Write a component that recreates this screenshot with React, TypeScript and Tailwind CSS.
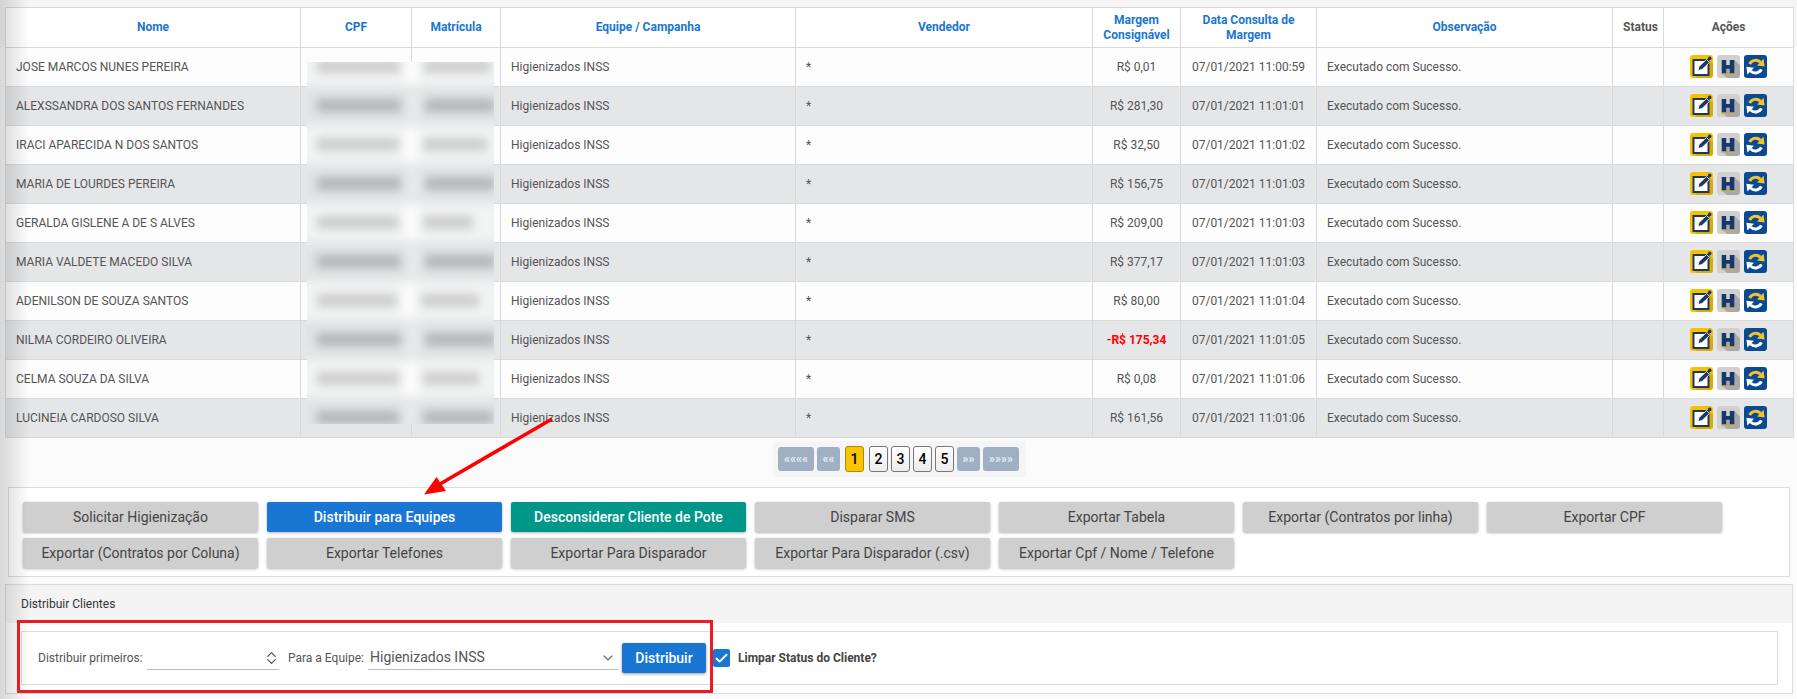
import { Check, ChevronDown, ChevronUp } from "lucide-react"

const rows = [
  { nome: "JOSE MARCOS NUNES PEREIRA", margem: "R$ 0,01", data: "07/01/2021 11:00:59", bars: [83, 66] },
  { nome: "ALEXSSANDRA DOS SANTOS FERNANDES", margem: "R$ 281,30", data: "07/01/2021 11:01:01", bars: [84, 70] },
  { nome: "IRACI APARECIDA N DOS SANTOS", margem: "R$ 32,50", data: "07/01/2021 11:01:02", bars: [82, 64] },
  { nome: "MARIA DE LOURDES PEREIRA", margem: "R$ 156,75", data: "07/01/2021 11:01:03", bars: [84, 70] },
  { nome: "GERALDA GISLENE A DE S ALVES", margem: "R$ 209,00", data: "07/01/2021 11:01:03", bars: [82, 50] },
  { nome: "MARIA VALDETE MACEDO SILVA", margem: "R$ 377,17", data: "07/01/2021 11:01:03", bars: [84, 70] },
  { nome: "ADENILSON DE SOUZA SANTOS", margem: "R$ 80,00", data: "07/01/2021 11:01:04", bars: [80, 58] },
  { nome: "NILMA CORDEIRO OLIVEIRA", margem: "-R$ 175,34", data: "07/01/2021 11:01:05", bars: [84, 70] },
  { nome: "CELMA SOUZA DA SILVA", margem: "R$ 0,08", data: "07/01/2021 11:01:06", bars: [82, 56] },
  { nome: "LUCINEIA CARDOSO SILVA", margem: "R$ 161,56", data: "07/01/2021 11:01:06", bars: [82, 70] },
]

const actionButtons = [
  "Solicitar Higienização",
  "Distribuir para Equipes",
  "Desconsiderar Cliente de Pote",
  "Disparar SMS",
  "Exportar Tabela",
  "Exportar (Contratos por linha)",
  "Exportar CPF",
  "Exportar (Contratos por Coluna)",
  "Exportar Telefones",
  "Exportar Para Disparador",
  "Exportar Para Disparador (.csv)",
  "Exportar Cpf / Nome / Telefone",
]

function EditIcon() {
  return (
    <svg width="23" height="23" viewBox="0 0 23 23">
      <rect width="23" height="23" rx="3" fill="#f6c200" />
      <path d="M20 6 L23 9 V20 A3 3 0 0 1 20 23 H7 L3 19 Z" fill="#dcaa00" />
      <rect x="3.5" y="5" width="15" height="15" fill="#fff" stroke="#1d3763" strokeWidth="2" />
      <path d="M8 15.5 L9 11.5 L16.5 4.5 L19.5 7.5 L12 14.5 Z" fill="#1d3763" stroke="#fff" strokeWidth="0.8" />
      <circle cx="19.7" cy="3.4" r="1.8" fill="#1d3763" />
    </svg>
  )
}

function HIcon() {
  return (
    <svg width="23" height="23" viewBox="0 0 23 23">
      <rect width="23" height="23" rx="3" fill="#d0d0d0" />
      <path d="M17.5 5 L23 10.5 V20 A3 3 0 0 1 20 23 H10 L5 18 Z" fill="#a9a9a9" />
      <path d="M4.7 5 H9.2 V10 H12.8 V5 H17.3 V18.5 H12.8 V13.7 H9.2 V18.5 H4.7 Z" fill="#17386b" />
      <rect x="4.7" y="18.5" width="4.5" height="1.5" fill="#e2b21c" />
      <rect x="12.8" y="18.5" width="4.5" height="1.5" fill="#e2b21c" />
    </svg>
  )
}

function RefreshIcon() {
  return (
    <svg width="23" height="23" viewBox="0 0 23 23">
      <rect width="23" height="23" rx="3" fill="#0a4a93" />
      <path d="M5.6 9 A6.8 6.8 0 0 1 16.4 7.2" fill="none" stroke="#f3c22c" strokeWidth="3" />
      <path d="M13 10.4 L20.6 11.4 L19.6 3.8 Z" fill="#f3c22c" />
      <path d="M17.4 14.4 A6.8 6.8 0 0 1 6.6 16" fill="none" stroke="#fff" strokeWidth="3" />
      <path d="M10 12.8 L2.4 11.8 L3.4 19.4 Z" fill="#fff" />
    </svg>
  )
}

function BlurOverlay() {
  return (
    <div className="absolute left-[307px] top-[62px] h-[362px] w-[187px] overflow-hidden">
      <div className="-mx-[10px] -mt-[15px] flex flex-col blur-[5px]">
        {rows.map((row, i) => (
          <div
            key={row.nome}
            className={`flex h-[39px] items-center pl-[20px] ${i % 2 ? "bg-[#e2e3e4]" : "bg-[#f2f3f3]"}`}
          >
            <div className={`h-[13px] ${i % 2 ? "bg-[#b4b5b6]" : "bg-[#cdcdce]"}`} style={{ width: row.bars[0] }} />
            <div className="flex w-[24px] justify-center">
              <div className={`h-[34px] w-[12px] ${i % 2 ? "bg-[#e8e9ea]" : "bg-[#fdfdfd]"}`} />
            </div>
            <div className={`h-[13px] ${i % 2 ? "bg-[#b4b5b6]" : "bg-[#cdcdce]"}`} style={{ width: row.bars[1] }} />
          </div>
        ))}
      </div>
    </div>
  )
}

const th = "border border-[#d9d9d9] px-1 text-center text-[12px] font-bold leading-[15px]"
const td = "border border-[#d9d9d9] text-[12px] text-[#555]"
const navBtn = "flex h-[24px] items-center justify-center rounded-[3px] bg-[#9fb0c3] text-[12px] font-bold text-[#e8edf2]"

export default function App() {
  return (
    <div
      className="relative h-[699px] w-[1797px] overflow-hidden bg-[#fbfbfb] text-[#555]"
      style={{ fontFamily: "Roboto, sans-serif" }}
    >
      <div className="-mb-[47px] h-[47px] w-full bg-[#f5f5f5]" />

      {/* tabela */}
      <div className="relative pl-[5px] pt-[7px]">
        <table className="w-[1788px] table-fixed border-collapse">
          <colgroup>
            <col className="w-[295px]" />
            <col className="w-[111px]" />
            <col className="w-[89px]" />
            <col className="w-[295px]" />
            <col className="w-[297px]" />
            <col className="w-[88px]" />
            <col className="w-[136px]" />
            <col className="w-[296px]" />
            <col className="w-[51px]" />
            <col className="w-[130px]" />
          </colgroup>
          <thead>
            <tr className="h-[40px] bg-white text-[#1976d2]">
              <th className={th}>Nome</th>
              <th className={th}>CPF</th>
              <th className={th}>Matrícula</th>
              <th className={th}>Equipe / Campanha</th>
              <th className={th}>Vendedor</th>
              <th className={th}>Margem Consignável</th>
              <th className={th}>Data Consulta de Margem</th>
              <th className={th}>Observação</th>
              <th className={`${th} pl-[9px] text-[#555]`}>Status</th>
              <th className={`${th} text-[#555]`}>Ações</th>
            </tr>
          </thead>
          <tbody>
            {rows.map((row, i) => (
              <tr key={row.nome} className={`h-[39px] ${i % 2 ? "bg-[#e5e6e8]" : "bg-[#fdfdfd]"}`}>
                <td className={`${td} pl-[10px]`}>{row.nome}</td>
                <td className={td} />
                <td className={td} />
                <td className={`${td} pl-[10px]`}>Higienizados INSS</td>
                <td className={`${td} pl-[10px]`}>*</td>
                <td className={`${td} text-center ${row.margem.startsWith("-") ? "font-bold text-[#ff0000]" : ""}`}>
                  {row.margem}
                </td>
                <td className={`${td} text-center`}>{row.data}</td>
                <td className={`${td} pl-[10px]`}>Executado com Sucesso.</td>
                <td className={td} />
                <td className={`${td} pb-[2px]`}>
                  <div className="flex justify-center gap-[4px]">
                    <EditIcon />
                    <HIcon />
                    <RefreshIcon />
                  </div>
                </td>
              </tr>
            ))}
          </tbody>
        </table>
        <BlurOverlay />
      </div>

      {/* paginacao */}
      <div className="mt-[3px] flex justify-center">
        <div className="ml-[2px] flex h-[36px] w-[253px] items-center bg-[#f5f5f5] pl-[5px] text-[14px] text-black">
          <span className={`${navBtn} w-[36px]`}>««««</span>
          <span className={`${navBtn} ml-[3px] w-[23px]`}>««</span>
          <span className="ml-[5px] flex h-[26px] w-[19px] items-center justify-center rounded-[3px] border border-[#a88a10] bg-[#f8c500] font-medium">
            1
          </span>
          {["2", "3", "4", "5"].map((n, i) => (
            <span
              key={n}
              className={`flex h-[26px] w-[19px] items-center justify-center rounded-[3px] border border-[#777] bg-gradient-to-b from-white to-[#ececec] font-medium ${i === 0 ? "ml-[5px]" : "ml-[3px]"}`}
            >
              {n}
            </span>
          ))}
          <span className={`${navBtn} ml-[3px] w-[23px]`}>»»</span>
          <span className={`${navBtn} ml-[3px] w-[36px]`}>»»»»</span>
        </div>
      </div>

      {/* botoes */}
      <div className="ml-[8px] mt-[10px] flex h-[90px] w-[1782px] flex-wrap content-start gap-x-[9px] gap-y-[6px] border border-[#dcdcdc] bg-white pl-[14px] pt-[14px]">
        {actionButtons.map((label, i) => (
          <button
            key={label}
            className={`h-[30px] w-[235px] rounded-[2px] text-[14px] shadow-[0_1px_3px_rgba(0,0,0,0.3)] ${
              i === 1
                ? "bg-[#1976d2] font-medium text-white"
                : i === 2
                  ? "bg-[#009688] font-medium text-white"
                  : "bg-[#cfcfcf] text-[#444]"
            }`}
          >
            {label}
          </button>
        ))}
      </div>

      {/* distribuir clientes */}
      <div className="ml-[5px] mt-[7px] h-[110px] w-[1788px] border border-[#dcdcdc] bg-white">
        <div className="flex h-[38px] items-center bg-[#f4f4f4] pl-[15px] text-[12px] text-[#333]">Distribuir Clientes</div>
        <div className="ml-[15px] mt-[8px] flex h-[54px] w-[1757px] items-center border border-[#dcdcdc] pl-[16px] text-[12px]">
          <span className="w-[109px]">Distribuir primeiros:</span>
          <div className="flex h-[24px] w-[132px] items-center justify-end border-b border-[#bbb] text-[#555]">
            <div className="flex flex-col">
              <ChevronUp size={15} className="-mb-[4px]" />
              <ChevronDown size={15} className="-mt-[4px]" />
            </div>
          </div>
          <span className="ml-[9px] w-[80px]">Para a Equipe:</span>
          <div className="flex h-[24px] w-[250px] items-center justify-between border-b border-[#bbb] pl-[2px] pr-[2px] text-[14px]">
            Higienizados INSS
            <ChevronDown size={16} className="text-[#777]" />
          </div>
          <button className="ml-[4px] h-[30px] w-[84px] rounded-[2px] bg-[#1976d2] text-[14px] font-medium text-white shadow-[0_1px_3px_rgba(0,0,0,0.4)]">
            Distribuir
          </button>
          <span className="ml-[7px] flex h-[18px] w-[17px] items-center justify-center rounded-[2px] bg-[#1976d2]">
            <Check size={15} strokeWidth={3} className="text-white" />
          </span>
          <span className="ml-[8px] text-[12px] font-bold text-[#444]">Limpar Status do Cliente?</span>
        </div>
      </div>

      {/* sombra da borda esquerda */}
      <div className="pointer-events-none absolute inset-y-0 left-0 w-[30px] bg-gradient-to-r from-[rgba(0,0,0,0.14)] to-transparent" />

      {/* marcacoes por cima do print */}
      <div className="pointer-events-none absolute left-[17px] top-[620px] h-[73px] w-[696px] border-[3px] border-[#ed1c24]" />
      <svg className="pointer-events-none absolute left-0 top-0" width="1797" height="699">
        <line x1="552" y1="419" x2="440" y2="484" stroke="#ff0000" strokeWidth="3.5" />
        <polygon points="424,494.5 436.5,477 446,491" fill="#ff0000" />
      </svg>
    </div>
  )
}
